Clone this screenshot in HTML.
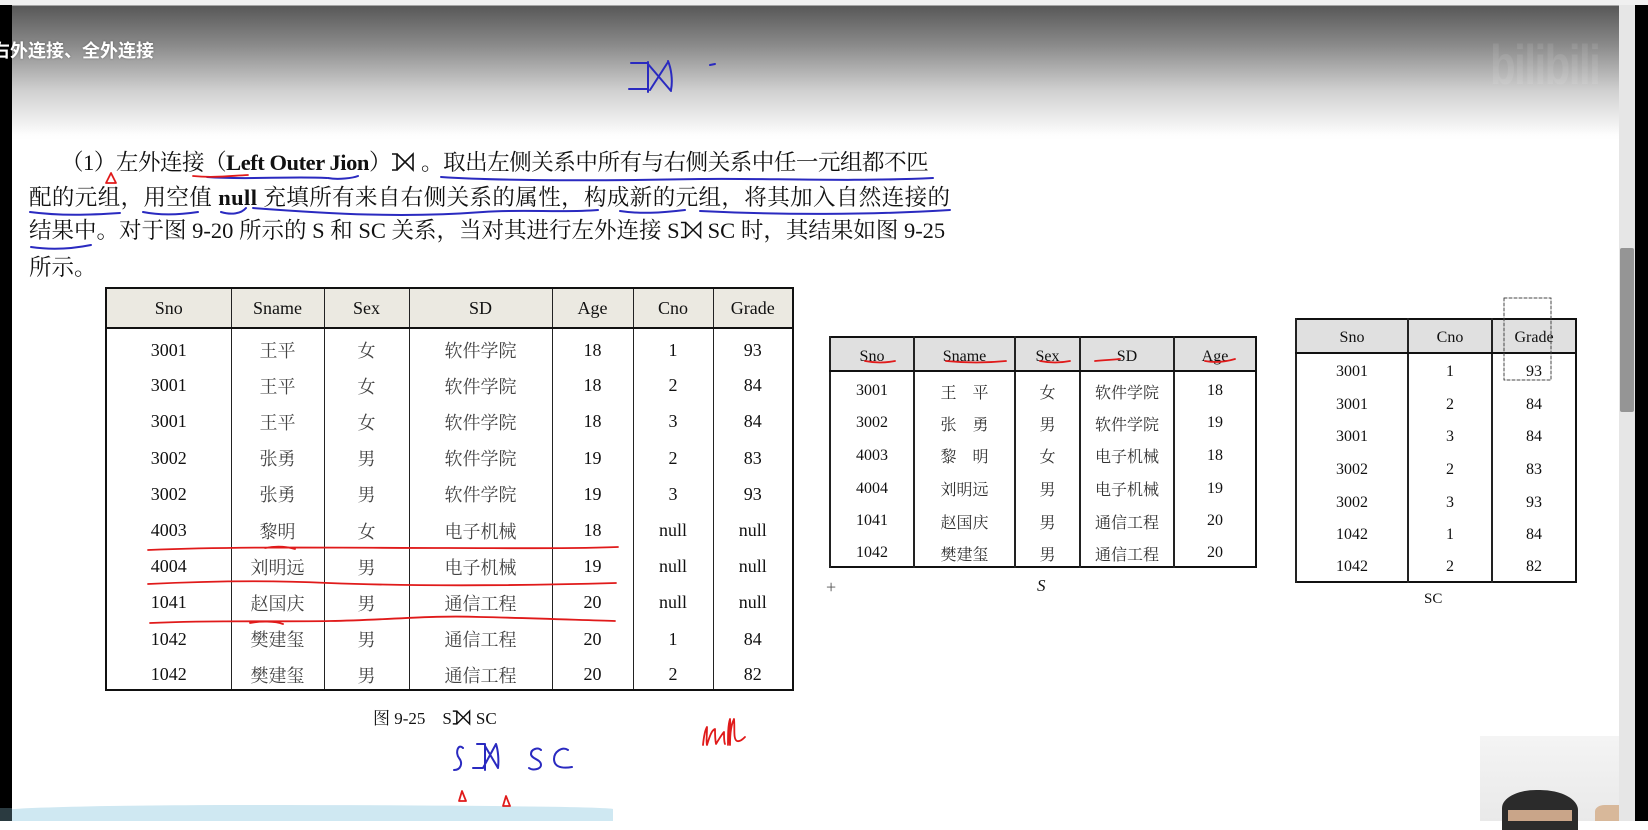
<!DOCTYPE html>
<html><head><meta charset="utf-8">
<style>
*{margin:0;padding:0;box-sizing:border-box}
body{width:1648px;height:821px;overflow:hidden;background:#fff;position:relative;font-family:"Liberation Serif","Noto Serif CJK SC",serif;color:#111}
.abs{position:absolute}
.top{left:0;top:0;width:1648px;height:140px;background:linear-gradient(#f0f0f0 0,#f0f0f0 5px,#585858 6px,#8a8a8a 45px,#cfcfcf 90px,#fdfdfd 135px,#fff 140px)}
.lbar{left:0;top:5px;width:12px;height:816px;background:#000}
.rbar{left:1635px;top:5px;width:13px;height:816px;background:#000}
.scroll{left:1619px;top:5px;width:16px;height:816px;background:#e6e6e6}
.thumb{left:1620px;top:248px;width:14px;height:164px;background:#959595;border-radius:2px}
.title{left:-8px;top:37px;font:bold 18px "Liberation Sans","Noto Sans CJK SC",sans-serif;color:#fff;white-space:nowrap;text-shadow:0 0 2px rgba(0,0,0,.3)}
.bili{left:1490px;top:32px;font:bold 56px "Liberation Sans Narrow","Liberation Sans",sans-serif;color:rgba(255,255,255,.09);letter-spacing:-2px;transform:scaleX(.75);transform-origin:left}
.line{white-space:nowrap;font-size:22.5px;line-height:30px}
.line b{font-weight:bold}
table{border-collapse:collapse;position:absolute;table-layout:fixed}
td,th{text-align:center;font-weight:normal;padding:0;vertical-align:middle;font-family:"Liberation Serif","Noto Serif CJK SC",serif}
.t1{left:105px;top:287px;border:2.5px solid #111;font-size:18px}
.t1 th{background:#ebe9e1;height:40px;border-bottom:2.5px solid #111;border-left:1.5px solid #222}
.t1 td{height:36.2px;padding-top:7px;border-left:1.5px solid #222}
.t1 .c{color:#444}
.t2{left:829px;top:336px;border:2.5px solid #111;font-size:16px}
.t2 th{background:#e0e0e0;height:34px;padding-top:6px;border-bottom:2.5px solid #111;border-left:2px solid #222}
.t2 td{height:32.6px;padding-top:7px;border-left:2px solid #222}
.t2 .c{color:#333}
.t3{left:1295px;top:318px;border:2.5px solid #111;font-size:16px}
.t3 th{background:#e0e0e0;height:34px;padding-top:3px;border-bottom:2.5px solid #111;border-left:2px solid #222}
.t3 td{height:32.7px;padding-top:5px;border-left:2px solid #222}
.cap{font-size:17px;white-space:nowrap}
</style></head><body>
<div class="abs top"></div>
<div class="abs lbar"></div>
<div class="abs scroll"></div>
<div class="abs thumb"></div>
<div class="abs rbar"></div>
<div class="abs title">右外连接、全外连接</div>
<div class="abs bili">bilibili</div>

<div class="abs line" style="left:61px;top:148px;letter-spacing:-0.45px">（1）左外连接（<b>Left Outer Jion</b>）<svg width="30" height="20" viewBox="0 0 30 20" style="vertical-align:-2px"><path d="M1 2h5v16H1M6 2l16 16V2L6 18" fill="none" stroke="#111" stroke-width="1.6"/></svg>。取出左侧关系中所有与右侧关系中任一元组都不匹</div>
<div class="abs line" style="left:29px;top:183px;letter-spacing:0.4px">配的元组，用空值 <b>null</b> 充填所有来自右侧关系的属性，构成新的元组，将其加入自然连接的</div>
<div class="abs line" style="left:29px;top:216px">结果中。对于图 9-20 所示的 S 和 SC 关系，当对其进行左外连接 S<svg width="28" height="20" viewBox="0 0 30 20" style="vertical-align:-2px"><path d="M1 2h5v16H1M6 2l16 16V2L6 18" fill="none" stroke="#111" stroke-width="1.6"/></svg>SC 时，其结果如图 9-25</div>
<div class="abs line" style="left:29px;top:253px">所示。</div>

<table class="t1">
<colgroup><col style="width:125px"><col style="width:93px"><col style="width:85px"><col style="width:143px"><col style="width:81px"><col style="width:80px"><col style="width:80px"></colgroup>
<tr><th>Sno</th><th>Sname</th><th>Sex</th><th>SD</th><th>Age</th><th>Cno</th><th>Grade</th></tr>
<tr><td>3001</td><td class="c">王平</td><td class="c">女</td><td class="c">软件学院</td><td>18</td><td>1</td><td>93</td></tr>
<tr><td>3001</td><td class="c">王平</td><td class="c">女</td><td class="c">软件学院</td><td>18</td><td>2</td><td>84</td></tr>
<tr><td>3001</td><td class="c">王平</td><td class="c">女</td><td class="c">软件学院</td><td>18</td><td>3</td><td>84</td></tr>
<tr><td>3002</td><td class="c">张勇</td><td class="c">男</td><td class="c">软件学院</td><td>19</td><td>2</td><td>83</td></tr>
<tr><td>3002</td><td class="c">张勇</td><td class="c">男</td><td class="c">软件学院</td><td>19</td><td>3</td><td>93</td></tr>
<tr><td>4003</td><td class="c">黎明</td><td class="c">女</td><td class="c">电子机械</td><td>18</td><td>null</td><td>null</td></tr>
<tr><td>4004</td><td class="c">刘明远</td><td class="c">男</td><td class="c">电子机械</td><td>19</td><td>null</td><td>null</td></tr>
<tr><td>1041</td><td class="c">赵国庆</td><td class="c">男</td><td class="c">通信工程</td><td>20</td><td>null</td><td>null</td></tr>
<tr><td>1042</td><td class="c">樊建玺</td><td class="c">男</td><td class="c">通信工程</td><td>20</td><td>1</td><td>84</td></tr>
<tr><td>1042</td><td class="c">樊建玺</td><td class="c">男</td><td class="c">通信工程</td><td>20</td><td>2</td><td>82</td></tr>
</table>

<table class="t2">
<colgroup><col style="width:84px"><col style="width:101px"><col style="width:65px"><col style="width:94px"><col style="width:82px"></colgroup>
<tr><th>Sno</th><th>Sname</th><th>Sex</th><th>SD</th><th>Age</th></tr>
<tr><td>3001</td><td class="c">王　平</td><td class="c">女</td><td class="c">软件学院</td><td>18</td></tr>
<tr><td>3002</td><td class="c">张　勇</td><td class="c">男</td><td class="c">软件学院</td><td>19</td></tr>
<tr><td>4003</td><td class="c">黎　明</td><td class="c">女</td><td class="c">电子机械</td><td>18</td></tr>
<tr><td>4004</td><td class="c">刘明远</td><td class="c">男</td><td class="c">电子机械</td><td>19</td></tr>
<tr><td>1041</td><td class="c">赵国庆</td><td class="c">男</td><td class="c">通信工程</td><td>20</td></tr>
<tr><td>1042</td><td class="c">樊建玺</td><td class="c">男</td><td class="c">通信工程</td><td>20</td></tr>
</table>

<table class="t3">
<colgroup><col style="width:112px"><col style="width:84px"><col style="width:84px"></colgroup>
<tr><th>Sno</th><th>Cno</th><th>Grade</th></tr>
<tr><td>3001</td><td>1</td><td>93</td></tr>
<tr><td>3001</td><td>2</td><td>84</td></tr>
<tr><td>3001</td><td>3</td><td>84</td></tr>
<tr><td>3002</td><td>2</td><td>83</td></tr>
<tr><td>3002</td><td>3</td><td>93</td></tr>
<tr><td>1042</td><td>1</td><td>84</td></tr>
<tr><td>1042</td><td>2</td><td>82</td></tr>
</table>

<div class="abs cap" style="left:1037px;top:576px;font-style:italic">S</div>
<div class="abs cap" style="left:1424px;top:591px;font-size:15px">SC</div>
<div class="abs cap" style="left:826px;top:577px;font-size:18px;color:#555">+</div>
<div class="abs cap" style="left:373px;top:704px">图 9-25　S<svg width="24" height="17" viewBox="0 0 30 20" style="vertical-align:-2px"><path d="M1 2h5v16H1M6 2l16 16V2L6 18" fill="none" stroke="#111" stroke-width="1.8"/></svg>SC</div>

<div class="abs" style="left:0;top:805px;width:613px;height:16px;background:#cfe8f2;border-radius:40% 60% 0 0/6px 4px 0 0"></div>
<div class="abs" style="left:0;top:808px;width:12px;height:13px;background:#2a3a40"></div>
<div class="abs" style="left:1480px;top:736px;width:139px;height:85px;background:linear-gradient(#f4f4f4,#e9e9e9)"></div>
<div class="abs" style="left:1502px;top:790px;width:76px;height:40px;background:#2b2b2b;border-radius:45% 50% 0 0"></div>
<div class="abs" style="left:1508px;top:810px;width:64px;height:11px;background:#c9a589"></div>
<div class="abs" style="left:1595px;top:805px;width:24px;height:16px;background:#d8b89a;border-radius:40% 0 0 0"></div>

<svg class="abs" style="left:0;top:0" width="1648" height="821" viewBox="0 0 1648 821" fill="none" stroke-linecap="round" stroke-linejoin="round">
<g stroke="#2a2ac0" stroke-width="2">
<path d="M631 63h17M648 62v30M629 89h18M648 64l23 27M671 90c2-10 0-22-3-29M668 62l-18 28"/>
<path d="M710 65l5-1"/>
<path d="M207 177c40 3 80-1 120 1M328 178c10 2 25 0 30-2"/>
<path d="M441 177c60 4 150 4 260 2c60-1 150 3 232-1"/>
<path d="M30 212c30 4 60 3 90 1M143 212c15 3 35 3 55 0M221 212c10 3 20 2 25-4M253 208c80 6 150 10 230 4c40-3 80 1 115-2M620 211c20 3 40 2 65-1M700 211c80 4 170 4 250-1"/>
<path d="M31 247c20 3 40 2 60-2"/>
<path d="M463 748c-5-5-8 5-4 10c4 5 2 12-5 12M477 744h8v26M473 768h10M485 746l13 22M498 768c1-8 0-18-2-24M496 744l-13 24M541 750c-3-3-10-1-10 4c0 5 10 5 10 11c0 4-8 6-12 3M568 750c-6-4-14 2-14 9c0 7 6 10 18 8"/>
</g>
<g stroke="#e01a1a" stroke-width="1.8">
<path d="M193 176c20 2 35 0 55-1" stroke="#e01a1a"/>
<path d="M116 183l-5-10l-5 10z"/>
<path d="M148 550c100-4 200-2 300-2c60 0 120 1 170-1M265 548c10-2 20-2 30 1"/>
<path d="M148 584c60-3 120-4 180-1c80 3 180 3 288 0"/>
<path d="M150 623c70-3 120-1 180-2c60-1 100-6 150-4c50 1 100 3 135 4M250 623c10-2 25-2 33 1"/>
<path d="M865 361c10 2 20 2 30 0M946 361c20 2 40 2 60 0M1040 361c10 2 20 2 30 0M1095 361c10-1 15-1 25-2M1205 361c10 2 20 1 30-2"/>
<path d="M703 745c1-10 2-15 4-18c0 8-1 16 0 18c3-10 5-15 8-16c0 6 0 10 1 15c3-5 6-10 8-12c0 5 0 10 1 12M728 745c0-10 0-20 2-26c1 9-1 18 0 26c0-10 1-20 4-26c1 10-1 20 3 22c3 1 6-2 8-4"/>
<path d="M459 801l3-10l4 10zM503 806l3-10l4 10z"/>
</g>
<rect x="1504" y="298" width="47" height="82" stroke="#444" stroke-width="1" stroke-dasharray="3 2"/>
</svg>
</body></html>
